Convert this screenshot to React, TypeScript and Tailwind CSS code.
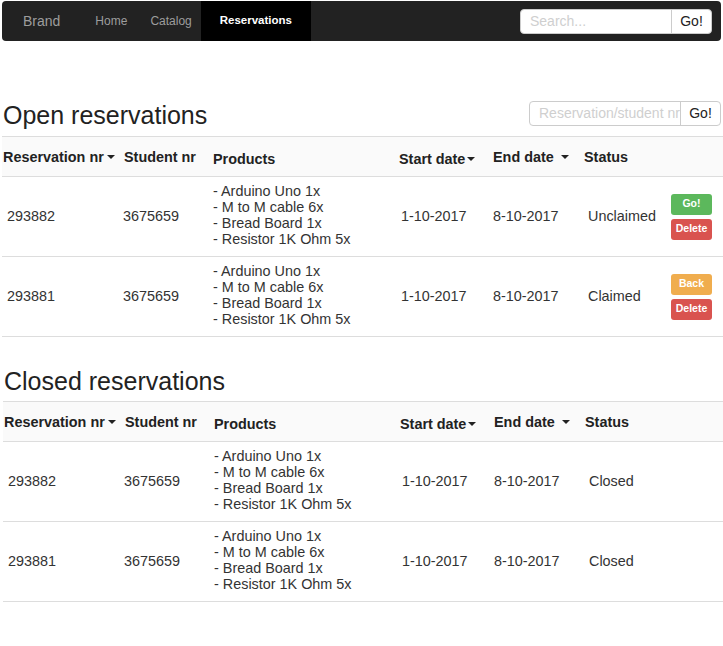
import React from "react";

type Reservation = {
    nr: string
    student: string
    products: string[]
    start: string
    end: string
    status: string
    actions?: ("go" | "back" | "delete")[]
}

const products = ["- Arduino Uno 1x", "- M to M cable 6x", "- Bread Board 1x", "- Resistor 1K Ohm 5x"];

const openRows: Reservation[] = [
    { nr: "293882", student: "3675659", products, start: "1-10-2017", end: "8-10-2017", status: "Unclaimed", actions: ["go", "delete"] },
    { nr: "293881", student: "3675659", products, start: "1-10-2017", end: "8-10-2017", status: "Claimed", actions: ["back", "delete"] },
];

const closedRows: Reservation[] = [
    { nr: "293882", student: "3675659", products, start: "1-10-2017", end: "8-10-2017", status: "Closed" },
    { nr: "293881", student: "3675659", products, start: "1-10-2017", end: "8-10-2017", status: "Closed" },
];

const Caret = ({ className = "" }: { className?: string }) => (
    <span className={"inline-block h-0 w-0 border-x-[4px] border-t-[4px] border-x-transparent border-t-[#222] " + className}></span>
);

const ActionButton = ({ kind }: { kind: "go" | "back" | "delete" }) => {
    const styles = {
        go: "bg-[#5cb85c]",
        back: "bg-[#f0ad4e]",
        delete: "bg-[#d9534f]",
    };
    const labels = { go: "Go!", back: "Back", delete: "Delete" };
    return (
        <button className={"flex h-[21px] w-[41px] items-center justify-center rounded-[3px] text-[10.5px] font-bold text-white " + styles[kind]}>
            {labels[kind]}
        </button>
    );
};

const SearchBox = ({ placeholder }: { placeholder: string }) => (
    <div className="flex h-[25px] rounded-[4px] border border-[#ccc] bg-white">
        <input
            placeholder={placeholder}
            className="w-[150px] rounded-l-[4px] bg-transparent pl-[9px] text-[14px] outline-none placeholder:text-[#cfcfcf]"
        />
        <button className="w-[40px] border-l border-[#ccc] text-[14px] text-[#222]">Go!</button>
    </div>
);

const ReservationTable = ({ rows, shift }: { rows: Reservation[]; shift: string }) => (
    <div className={"ml-[2px] text-[14.4px] " + shift}>
        {/* header */}
        <div className="flex h-[41px] items-center border-y border-[#ddd] bg-[#fafafa] pt-[2px] font-bold text-[#222]">
            <div className="flex w-[118px] items-center pl-[1px]">Reservation nr<Caret className="ml-[3px]" /></div>
            <div className="w-[90px] pl-[4px]">Student nr</div>
            <div className="w-[186px] pl-[3px] pt-[4px]">Products</div>
            <div className="flex w-[94px] items-center pl-[3px] pt-[4px]">Start date<Caret className="ml-[2px]" /></div>
            <div className="flex w-[90px] items-center pl-[3px]">End date<Caret className="ml-[7px]" /></div>
            <div className="w-[85px] pl-[4px]">Status</div>
            <div className="flex-1"></div>
        </div>
        {rows.map((r, i) => (
            <div key={i} className="flex h-[80px] items-center border-b border-[#ddd] text-[#333]">
                <div className="w-[118px] pl-[5px]">{r.nr}</div>
                <div className="w-[90px] pl-[3px]">{r.student}</div>
                <div className="w-[186px] pb-[3px] pl-[3px] leading-[16px]">
                    {r.products.map((p) => <div key={p}>{p}</div>)}
                </div>
                <div className="w-[94px] pl-[5px]">{r.start}</div>
                <div className="w-[90px] pl-[3px]">{r.end}</div>
                <div className="w-[85px] pl-[8px]">{r.status}</div>
                <div className="flex flex-1 flex-col gap-[4px] pl-[6px]">
                    {r.actions?.map((a, j) => <ActionButton key={j} kind={a} />)}
                </div>
            </div>
        ))}
    </div>
);

const App = () => {
    return <div className="min-h-[646px] w-[723px] bg-white font-['Liberation_Sans',Arial,sans-serif] text-[#333]">
        <nav className="mx-[2px] mt-[1px] flex h-[40px] items-center rounded-[4px] bg-[#222]">
            <span className="ml-[21px] text-[14px] text-[#9d9d9d]">Brand</span>
            <span className="ml-[35px] text-[12px] text-[#9d9d9d]">Home</span>
            <span className="ml-[23px] text-[12px] text-[#9d9d9d]">Catalog</span>
            <span className="ml-[9px] flex h-full items-center bg-[#000] px-[19px] text-[11.5px] font-bold text-white">Reservations</span>
            <div className="ml-auto mr-[9px]">
                <SearchBox placeholder="Search..." />
            </div>
        </nav>

        <div className="mt-[55px] flex h-[34px] items-start justify-between pl-[3px] pr-[2px]">
            <h2 className="pt-[4px] text-[25px] leading-[30px] text-[#222]">Open reservations</h2>
            <div className="mt-[5px]">
                <SearchBox placeholder="Reservation/student nr" />
            </div>
        </div>
        <div className="mt-[6px]">
            <ReservationTable rows={openRows} shift="" />
        </div>

        <h2 className="mt-[25px] h-[34px] pl-[4px] pt-[4px] text-[25px] leading-[30px] text-[#222]">Closed reservations</h2>
        <div className="mt-[5px]">
            <ReservationTable rows={closedRows} shift="pl-[1px]" />
        </div>
    </div>
};

export default App;
